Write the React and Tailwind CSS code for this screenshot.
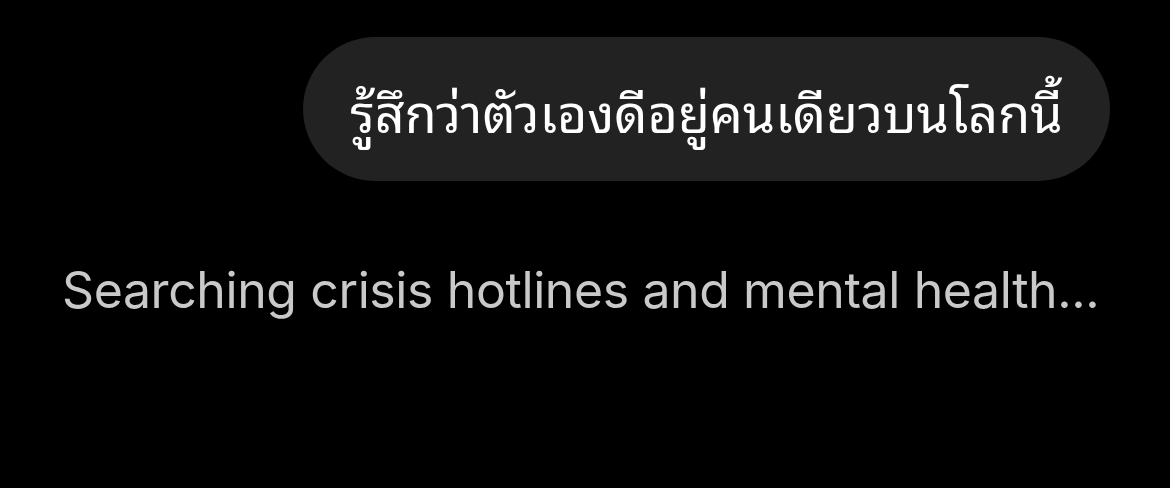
export default function App() {
  return (
    <div className="w-[1170px] h-[488px] bg-black overflow-hidden flex flex-col">
      <div className="flex justify-end pt-[37px] pr-[60px]">
        <div className="h-[144px] w-[807px] rounded-[72px] bg-[#222222] flex items-center justify-center">
          <span className="text-white text-[52px] leading-none pt-[2px]" style={{ fontFamily: '"Noto Sans Thai Looped", Loma, Garuda, "Noto Sans Thai", "Noto Sans", "DejaVu Sans", sans-serif' }}>
            รู้สึกว่าตัวเองดีอยู่คนเดียวบนโลกนี้
          </span>
        </div>
      </div>
      <div className="pt-[84px] pl-[62px]">
        <p className="text-[#c9c9c9] text-[50px] leading-none tracking-[-0.4px]" style={{ fontFamily: 'Inter, sans-serif' }}>
          Searching crisis hotlines and mental health...
        </p>
      </div>
    </div>
  );
}
